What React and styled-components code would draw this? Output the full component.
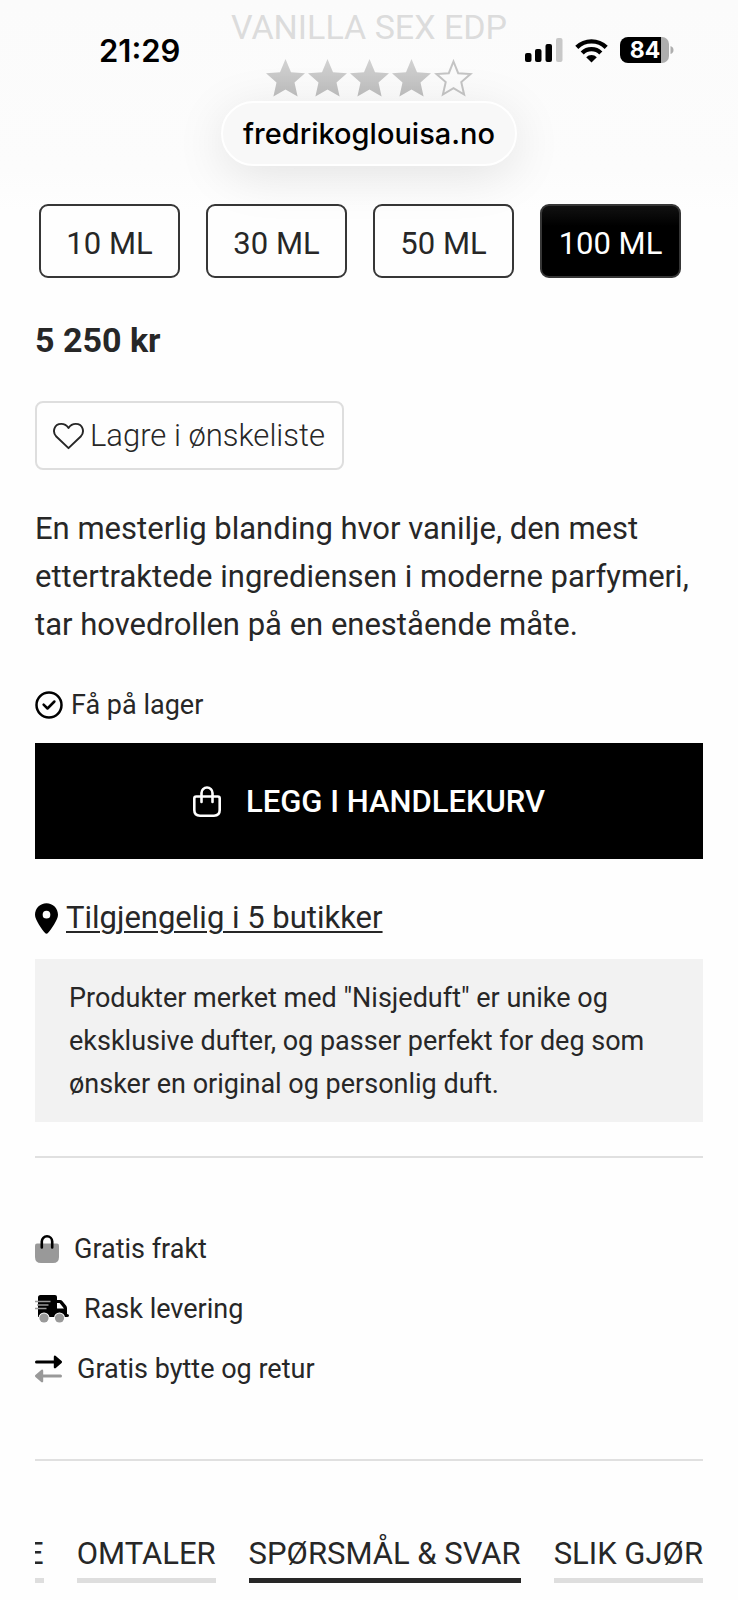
import { useState } from "react";
import styled, { createGlobalStyle } from "styled-components";
import { FaLocationDot } from "react-icons/fa6";

const GlobalStyle = createGlobalStyle`
  * {
    box-sizing: border-box;
  }
  body {
    margin: 0;
    background: linear-gradient(#fbfbfb 0, #fcfcfc 170px, #fefefe 210px) no-repeat #fefefe;
    color: #272727;
    font-family: Roboto, "Liberation Sans", sans-serif;
    font-size: 31px;
  }
  button {
    font: inherit;
    color: inherit;
    cursor: pointer;
  }
  p, h1, ul {
    margin: 0;
    padding: 0;
    font-weight: 400;
  }
  svg {
    display: block;
    flex-shrink: 0;
  }
`;

const Page = styled.main`
  display: flex;
  flex-direction: column;
  padding: 6px 35px 17px;
  overflow: hidden;
`;

const StatusBar = styled.div`
  position: absolute;
  top: 30px;
  left: 0;
  right: 0;
  height: 40px;
  padding: 0 64px 0 99px;
  display: flex;
  justify-content: space-between;
  align-items: center;
  color: black;
  font-family: Inter, "Liberation Sans", sans-serif;
  font-size: 31px;
  font-weight: 600;
`;

const StatusIcons = styled.div`
  display: flex;
  align-items: center;
  gap: 12px;
`;

const AddressPill = styled.div`
  position: absolute;
  top: 101px;
  left: 50%;
  transform: translateX(-50%);
  height: 65px;
  padding: 0 20px;
  border: 2px solid white;
  border-radius: 33px;
  background-color: #f8f8f8;
  box-shadow: 0 10px 50px rgba(0, 0, 0, 0.1);
  display: flex;
  align-items: center;
  color: black;
  font-family: Inter, "Liberation Sans", sans-serif;
  font-size: 29px;
  font-weight: 500;
`;

const Title = styled.h1`
  text-align: center;
  font-size: 34px;
  line-height: 42px;
  color: #dcdcdc;
`;

const Stars = styled.div`
  display: flex;
  justify-content: center;
  gap: 3px;
  margin: 11px 0 107px;
`;

const Sizes = styled.div`
  display: flex;
  gap: 26px;
  padding-left: 4px;
`;

const SizeButton = styled.button`
  width: 141px;
  height: 74px;
  padding: 4px 0 0;
  border: 2px solid #363636;
  border-radius: 9px;
  color: ${(props) => (props.$active ? "white" : "#272727")};
  background: ${(props) =>
    props.$active ? "linear-gradient(#111 0, #000 20px)" : "transparent"};
`;

const Price = styled.p`
  margin-top: 42px;
  font-size: 34px;
  font-weight: 700;
  line-height: 40px;
`;

const WishButton = styled.button`
  align-self: flex-start;
  display: flex;
  align-items: center;
  gap: 6px;
  height: 69px;
  margin-top: 41px;
  padding: 0 17px 0 16px;
  border: 2px solid #dedede;
  border-radius: 8px;
  background: none;
  font-weight: 300;
`;

const Description = styled.p`
  margin-top: 35px;
  line-height: 48px;
`;

const Stock = styled.p`
  display: flex;
  align-items: center;
  gap: 8px;
  margin-top: 40px;
  font-size: 27px;
  line-height: 32px;
`;

const CartButton = styled.button`
  display: flex;
  align-items: center;
  justify-content: center;
  gap: 25px;
  height: 116px;
  margin-top: 22px;
  border: none;
  background-color: black;
  color: white;
  font-weight: 500;
`;

const StoreRow = styled.div`
  display: flex;
  align-items: center;
  gap: 8px;
  margin-top: 39px;
  line-height: 40px;
  > svg {
    width: 23px;
    color: black;
  }
  > a {
    color: inherit;
    text-decoration-thickness: 2px;
    text-underline-offset: 3px;
  }
`;

const Notice = styled.p`
  margin-top: 21px;
  padding: 18px 34px 16px;
  background-color: #f2f2f2;
  font-size: 27px;
  line-height: 43px;
`;

const Divider = styled.hr`
  width: 100%;
  height: 2px;
  margin: 34px 0 0;
  border: none;
  background-color: #e0e0e0;
`;

const Perks = styled.ul`
  display: flex;
  flex-direction: column;
  margin: 61px 0 26px;
  list-style: none;
  font-size: 27px;
  line-height: 60px;
  > li {
    display: flex;
    align-items: center;
    gap: 15px;
  }
`;

const Tabs = styled.nav`
  display: flex;
  justify-content: flex-end;
  gap: 33px;
  margin-top: 71px;
  overflow: hidden;
`;

const Tab = styled.button`
  flex-shrink: 0;
  padding: 0 0 2px;
  border: none;
  border-bottom: 5px solid ${(props) => (props.$active ? "#272727" : "#dedede")};
  background: none;
  line-height: 44px;
`;

const starPath =
  "M19.5 0 L25 13.2 L39 14.2 L28.5 23.4 L31.6 37.5 L19.5 30.4 L7.4 37.5 L10.5 23.4 L0 14.2 L14 13.2 Z";

const Star = ({ filled }) => (
  <svg width="39" height="38" viewBox="0 0 39 38">
    <defs>
      <linearGradient id="starFill" x1="0" y1="0" x2="0" y2="1">
        <stop offset="0" stopColor="#d2d2d2" />
        <stop offset="1" stopColor="#bebebe" />
      </linearGradient>
    </defs>
    {filled ? (
      <path d={starPath} fill="url(#starFill)" />
    ) : (
      <path
        d="M19.5 2.5 L24.2 14.2 L36.5 15.1 L27.3 23.1 L30.1 35.5 L19.5 29.2 L8.9 35.5 L11.7 23.1 L2.5 15.1 L14.8 14.2 Z"
        fill="none"
        stroke="#c4c4c4"
        strokeWidth="2"
      />
    )}
  </svg>
);

const SignalIcon = () => (
  <svg width="38" height="25" viewBox="0 0 38 25">
    <rect x="0" y="15" width="6.500" height="9" rx="2" />
    <rect x="10" y="11" width="6.500" height="13" rx="2" />
    <rect x="20.500" y="6" width="6.500" height="18" rx="2" />
    <rect x="31" y="0" width="6.500" height="24" rx="2" fill="#c8c8c8" />
  </svg>
);

const WifiIcon = () => (
  <svg width="33" height="25" viewBox="0 0 33 25">
    <g fill="none" stroke="black" strokeWidth="4.400">
      <path d="M1.800 9.400 a21 21 0 0 1 29.400 0" />
      <path d="M7.200 15 a13.200 13.200 0 0 1 18.600 0" />
    </g>
    <path d="M11.200 19.200 a7.600 7.600 0 0 1 10.600 0 L16.500 24.600 Z" />
  </svg>
);

const BatteryIcon = () => (
  <svg width="54" height="26" viewBox="0 0 54 26">
    <path d="M41 0 h1 a7 7 0 0 1 7 7 v12 a7 7 0 0 1 -7 7 h-1 Z" fill="#aeaeae" />
    <path d="M41 0 H8 a8 8 0 0 0 -8 8 v10 a8 8 0 0 0 8 8 H41 Z" />
    <path d="M50.500 9 q3 1 3 4 t-3 4 Z" fill="#aeaeae" />
    <text x="25" y="21" textAnchor="middle" fill="white" fontSize="23" fontWeight="700">
      84
    </text>
  </svg>
);

const HeartIcon = () => (
  <svg width="31" height="28" viewBox="0 0 32 28" fill="none" stroke="#272727" strokeWidth="2">
    <path
      strokeLinejoin="round"
      d="M16 26.500 L3.400 14.500 C-1 10 1 1.500 8.500 1.500 C12 1.500 14.500 3.500 16 5.700 C17.500 3.500 20 1.500 23.500 1.500 C31 1.500 33 10 28.600 14.500 Z"
    />
  </svg>
);

const CheckIcon = () => (
  <svg width="28" height="28" viewBox="0 0 28 28" fill="none" stroke="black" strokeWidth="2.500">
    <circle cx="14" cy="14" r="12.500" />
    <path d="M8.600 13.600 L12.500 17.500 L19.400 10.500" strokeLinecap="round" strokeLinejoin="round" />
  </svg>
);

const CartIcon = () => (
  <svg width="28" height="31" viewBox="0 0 28 31" fill="none" stroke="white" strokeWidth="2.600">
    <path d="M3.200 10.500 H24.800 Q26.700 10.500 26.700 12.400 V24 Q26.700 29.700 21 29.700 H7 Q1.300 29.700 1.300 24 V12.400 Q1.300 10.500 3.200 10.500 Z" />
    <path d="M8.500 16 V7 a5.500 5.500 0 0 1 11 0 V16" strokeLinecap="round" />
  </svg>
);

const BagIcon = () => (
  <svg width="24" height="28" viewBox="0 0 24 28">
    <path d="M2 8.500 H22 Q24 8.500 24 10.500 V22 Q24 28 18 28 H6 Q0 28 0 22 V10.500 Q0 8.500 2 8.500 Z" fill="#999" />
    <path d="M6.800 12.500 V6.500 a5.200 5.200 0 0 1 10.400 0 V12.500" fill="none" stroke="black" strokeWidth="2.600" strokeLinecap="round" />
  </svg>
);

const TruckIcon = () => (
  <svg width="34" height="28" viewBox="0 0 34 28">
    <path
      fillRule="evenodd"
      d="M5.500 0 H20 Q22 0 22 2 V5 H25 Q26.500 5 27.500 6.200 L31 10.500 Q32 11.800 32 13.200 V19 Q34 19 34 20.500 Q34 22 32 22 H3 V2.500 Q3 0 5.500 0 Z M22 8 V13.500 H29 L24.600 8 Z"
    />
    <path d="M0 6.500 H15.500 M2 10 H13.500 M0 13.500 H11.500" stroke="#999" strokeWidth="1.400" />
    <circle cx="9" cy="23" r="5.500" fill="white" />
    <circle cx="24.500" cy="23" r="5.500" fill="white" />
    <circle cx="9" cy="23" r="4.600" fill="#999" />
    <circle cx="24.500" cy="23" r="4.600" fill="#999" />
  </svg>
);

const ArrowsIcon = () => (
  <svg width="27" height="28" viewBox="0 0 27 28" strokeLinecap="round" strokeLinejoin="round">
    <g fill="black" stroke="black">
      <path d="M1.500 7 H20" strokeWidth="3" />
      <path d="M20 1.800 L25.800 7 L20 12.200 Z" strokeWidth="2.400" />
    </g>
    <g fill="#999" stroke="#999">
      <path d="M7 21 H25.500" strokeWidth="3" />
      <path d="M7 15.800 L1.200 21 L7 26.200 Z" strokeWidth="2.400" />
    </g>
  </svg>
);

const sizes = ["10 ML", "30 ML", "50 ML", "100 ML"];
const tabs = ["E", "OMTALER", "SPØRSMÅL & SVAR", "SLIK GJØR"];

const App = () => {
  const [size, setSize] = useState("100 ML");
  const [tab, setTab] = useState("SPØRSMÅL & SVAR");

  return (
    <>
      <GlobalStyle />
      <Page>
        <Title>VANILLA SEX EDP</Title>
        <Stars>
          {[1, 2, 3, 4, 5].map((n) => (
            <Star key={n} filled={n < 5} />
          ))}
        </Stars>
        <Sizes>
          {sizes.map((s) => (
            <SizeButton key={s} $active={s === size} onClick={() => setSize(s)}>
              {s}
            </SizeButton>
          ))}
        </Sizes>
        <Price>5 250 kr</Price>
        <WishButton>
          <HeartIcon />
          Lagre i ønskeliste
        </WishButton>
        <Description>
          En mesterlig blanding hvor vanilje, den mest ettertraktede
          ingrediensen i moderne parfymeri, tar hovedrollen på en enestående
          måte.
        </Description>
        <Stock>
          <CheckIcon />
          Få på lager
        </Stock>
        <CartButton>
          <CartIcon />
          LEGG I HANDLEKURV
        </CartButton>
        <StoreRow>
          <FaLocationDot size={31} />
          <a href="#butikker">Tilgjengelig i 5 butikker</a>
        </StoreRow>
        <Notice>
          Produkter merket med "Nisjeduft" er unike og eksklusive dufter, og
          passer perfekt for deg som ønsker en original og personlig duft.
        </Notice>
        <Divider />
        <Perks>
          <li>
            <BagIcon />
            Gratis frakt
          </li>
          <li>
            <TruckIcon />
            Rask levering
          </li>
          <li>
            <ArrowsIcon />
            Gratis bytte og retur
          </li>
        </Perks>
        <Divider />
        <Tabs>
          {tabs.map((t) => (
            <Tab key={t} $active={t === tab} onClick={() => setTab(t)}>
              {t}
            </Tab>
          ))}
        </Tabs>
      </Page>
      <StatusBar>
        <span>21:29</span>
        <StatusIcons>
          <SignalIcon />
          <WifiIcon />
          <BatteryIcon />
        </StatusIcons>
      </StatusBar>
      <AddressPill>fredrikoglouisa.no</AddressPill>
    </>
  );
};

export default App;
